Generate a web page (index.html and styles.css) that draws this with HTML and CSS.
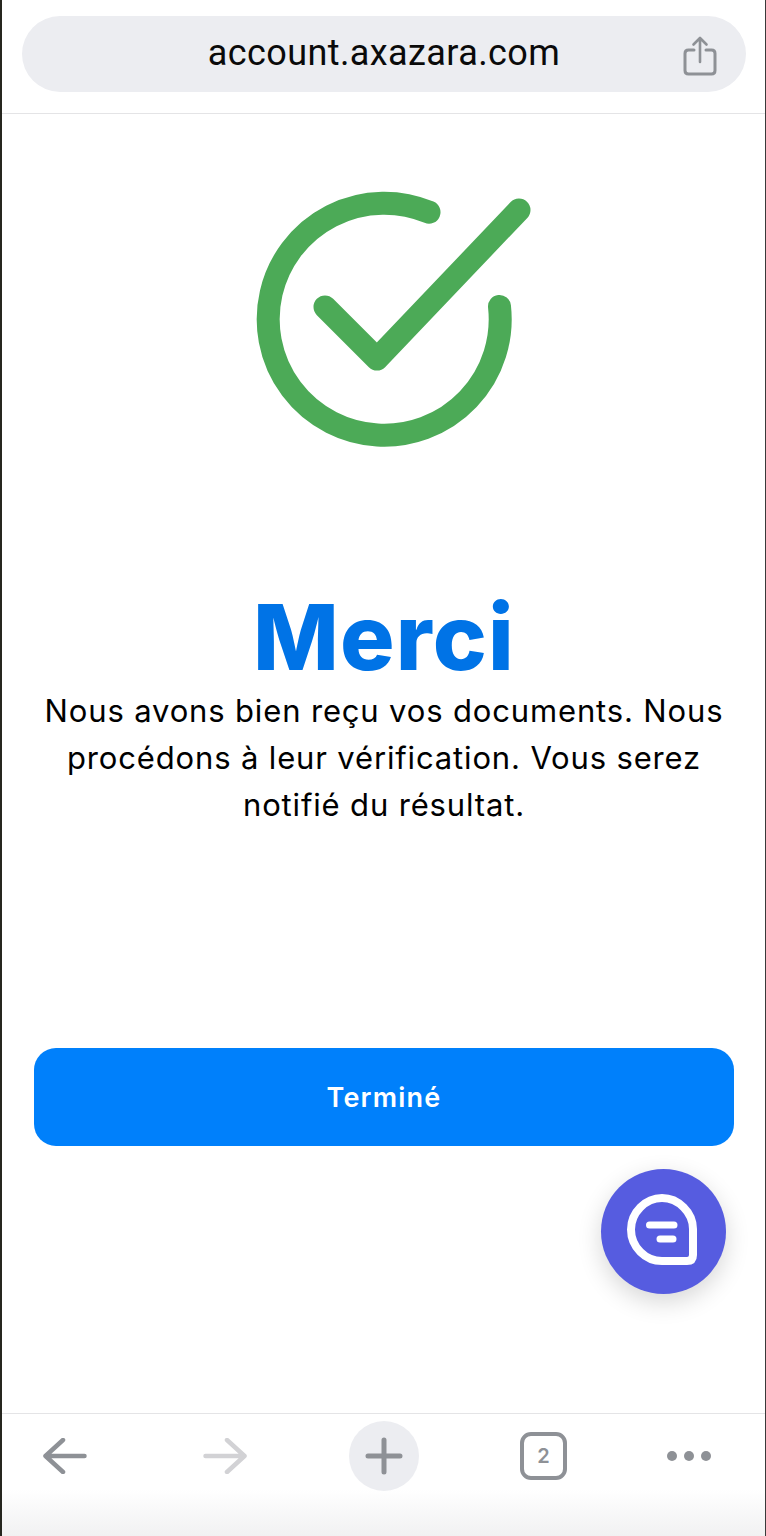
FILE: index.html
```html
<!DOCTYPE html>
<html lang="fr">
<head>
    <meta charset="UTF-8">
    <meta name="viewport" content="width=device-width, initial-scale=1.0">
    <title>Merci</title>
    <link rel="stylesheet" href="styles.css">
</head>
<body>
    <header class="top-bar">
        <div class="url-pill">
            <span class="url-text">account.axazara.com</span>
            <svg class="share-icon" width="34" height="40" viewBox="0 0 34 40" fill="none" stroke="#8e9196" stroke-linecap="round" stroke-linejoin="round">
                <path stroke-width="3" d="M11 14H5.500Q2 14 2 17.500V34.500Q2 38 5.500 38H28.500Q32 38 32 34.500V17.500Q32 14 28.500 14H23"/>
                <path stroke-width="2.600" d="M17 26V2M10.500 8.500L17 2L23.500 8.500"/>
            </svg>
        </div>
    </header>

    <main class="content">
        <svg class="check-icon" width="256" height="256" viewBox="0 0 256 256" fill="none" stroke="#4caa57" stroke-width="23" stroke-linecap="round" stroke-linejoin="round">
            <path d="M173 21.200A116 116 0 1 0 243.500 115.500"/>
            <path d="M69 116L121 168L263 19"/>
        </svg>
        <h1 class="title">Merci</h1>
        <p class="message">Nous avons bien reçu vos documents. Nous procédons à leur vérification. Vous serez notifié du résultat.</p>
        <button class="done-button">Terminé</button>
    </main>

    <button class="chat-button" aria-label="Chat">
        <svg width="70" height="72" viewBox="0 0 70 72" fill="none" stroke="#fff" stroke-linecap="round" stroke-linejoin="round">
            <path stroke-width="8" d="M35 4C51.500 4 66 18.500 66 35V61Q66 67 60 67H35C18.500 67 4 53 4 35.500C4 18.500 18.500 4 35 4Z"/>
            <path stroke-width="7" d="M22.500 31H47M33 45H46"/>
        </svg>
    </button>

    <footer class="bottom-bar">
        <div class="bar-item back-item">
            <svg width="44" height="36" viewBox="0 0 44 36" fill="none" stroke="#8e9196" stroke-width="4.500" stroke-linecap="round" stroke-linejoin="round">
                <path d="M41.500 18H2.500M20 2L2.500 18L20 34"/>
            </svg>
        </div>
        <div class="bar-item forward-item">
            <svg width="44" height="36" viewBox="0 0 44 36" fill="none" stroke="#d2d2d5" stroke-width="4.500" stroke-linecap="round" stroke-linejoin="round">
                <path d="M2.500 18H41.500M24 2L41.500 18L24 34"/>
            </svg>
        </div>
        <div class="bar-item">
            <div class="new-tab">
                <svg width="38" height="38" viewBox="0 0 38 38" fill="none" stroke="#8e9196" stroke-width="5" stroke-linecap="round">
                    <path d="M19 3V35M3 19H35"/>
                </svg>
            </div>
        </div>
        <div class="bar-item">
            <div class="tab-count">2</div>
        </div>
        <div class="bar-item">
            <div class="more-dots"><span></span><span></span><span></span></div>
        </div>
    </footer>
</body>
</html>
```

FILE: styles.css
```css
html, body {
    margin: 0;
    padding: 0;
}
body {
    position: relative;
    display: flex;
    flex-direction: column;
    box-sizing: border-box;
    width: 766px;
    height: 1536px;
    overflow: hidden;
    background-color: white;
    border-left: 2px solid #26261f;
    border-right: 1px solid #3a3a3a;
    font-family: Inter, "Liberation Sans", sans-serif;
}
.top-bar {
    flex: none;
    height: 113px;
    border-bottom: 1px solid #e4e4e6;
}
.url-pill {
    position: relative;
    display: flex;
    align-items: center;
    justify-content: center;
    height: 76px;
    margin: 16px 19px 0 20px;
    border-radius: 38px;
    background-color: #ecedf1;
}
.url-text {
    padding-bottom: 3px;
    font-family: Roboto, "Liberation Sans", sans-serif;
    font-size: 36px;
    letter-spacing: 0.4px;
    color: #0a0a0a;
}
.share-icon {
    position: absolute;
    right: 29px;
    top: 20px;
}
.content {
    flex: 1;
    display: flex;
    flex-direction: column;
    align-items: center;
    padding: 76.500px 31px 0 32px;
}
.check-icon {
    flex: none;
    overflow: visible;
}
.title {
    margin: 140.500px 0 0;
    font-size: 91px;
    font-weight: 800;
    line-height: 100px;
    letter-spacing: 1.2px;
    color: #0073e6;
}
.message {
    margin: 0;
    width: 700px;
    font-size: 31px;
    line-height: 47px;
    letter-spacing: 0.85px;
    text-align: center;
    color: #000;
}
.done-button {
    flex: none;
    width: 700px;
    height: 98px;
    margin-top: 220px;
    border: none;
    border-radius: 22px;
    background-color: #0080fb;
    color: white;
    font-family: inherit;
    font-size: 27px;
    font-weight: 600;
    letter-spacing: 1.2px;
}
.chat-button {
    position: absolute;
    left: 599px;
    top: 1169px;
    display: flex;
    align-items: center;
    justify-content: center;
    box-sizing: border-box;
    width: 125px;
    height: 125px;
    padding: 0 4px 4px 0;
    border: none;
    border-radius: 50%;
    background-color: #565ce0;
    box-shadow: 0 8px 24px rgba(0, 0, 0, 0.16);
}
.bottom-bar {
    flex: none;
    display: flex;
    gap: 101px;
    height: 122px;
    padding-left: 41px;
    border-top: 1px solid #e4e4e6;
    background: linear-gradient(to bottom, white 62%, #f1f1f2 100%);
}
.bar-item {
    display: flex;
    align-items: center;
    justify-content: center;
    height: 84px;
}
.back-item {
    margin-right: 15px;
}
.forward-item {
    margin-right: 1px;
}
.new-tab {
    display: flex;
    align-items: center;
    justify-content: center;
    width: 70px;
    height: 70px;
    border-radius: 50%;
    background-color: #ecedf1;
}
.tab-count {
    display: flex;
    align-items: center;
    justify-content: center;
    box-sizing: border-box;
    width: 47px;
    height: 48px;
    border: 4px solid #8e9196;
    border-radius: 11px;
    font-size: 20px;
    font-weight: 600;
    color: #8e9196;
}
.more-dots {
    display: flex;
    gap: 7px;
    margin-left: -1px;
}
.more-dots span {
    width: 10px;
    height: 10px;
    border-radius: 50%;
    background-color: #8e9196;
}
```
